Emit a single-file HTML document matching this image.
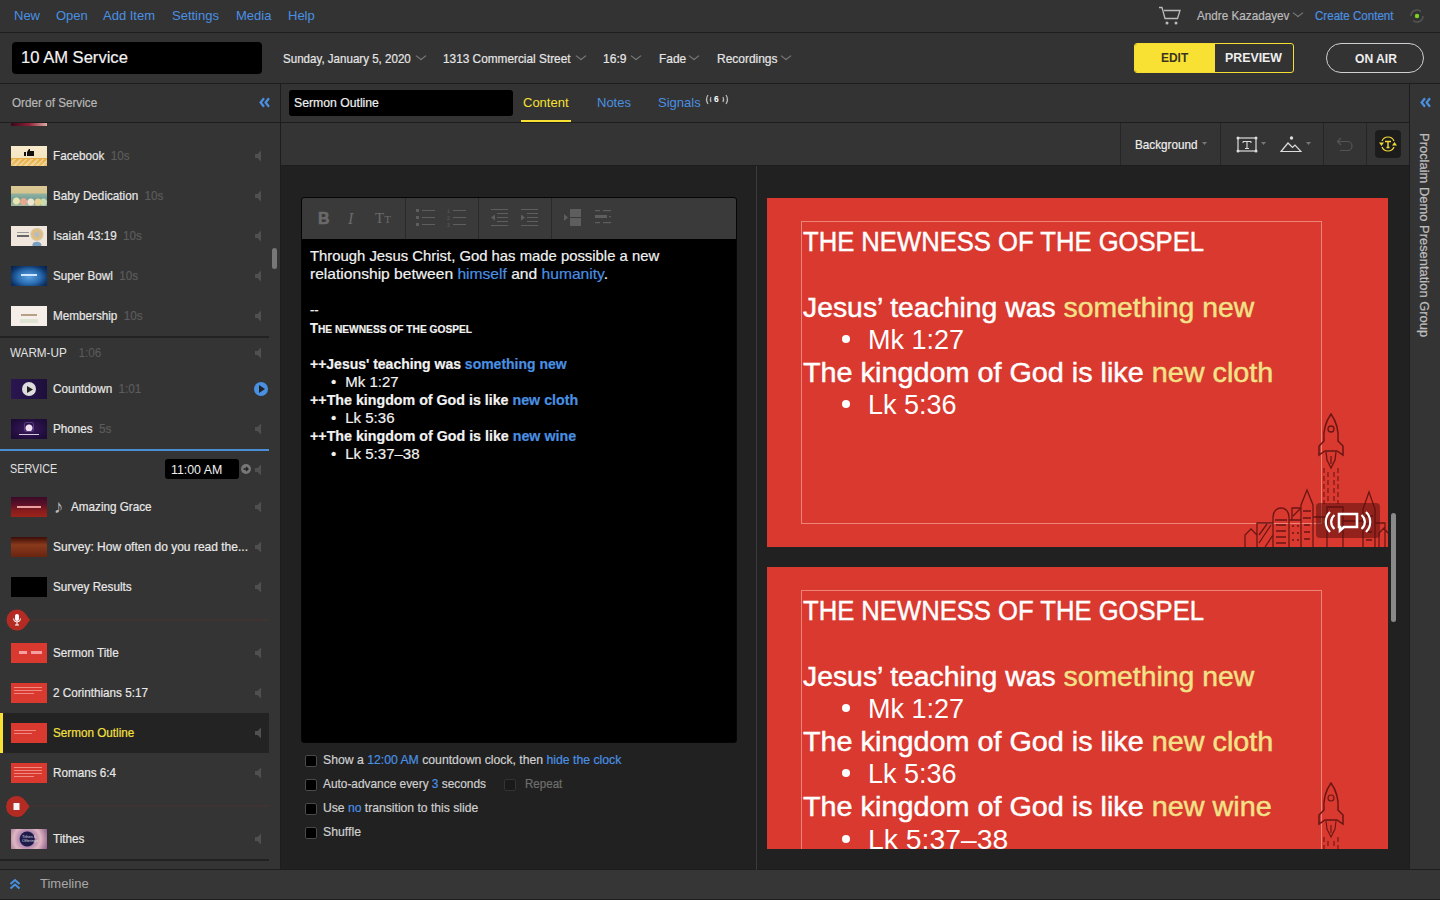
<!DOCTYPE html>
<html><head><meta charset="utf-8">
<style>
*{margin:0;padding:0;box-sizing:border-box}
html,body{width:1440px;height:900px;overflow:hidden;background:#333;font-family:"Liberation Sans",sans-serif;color:#ddd}
.a{position:absolute}
.t{position:absolute;white-space:nowrap;line-height:1;transform-origin:0 0}
#top{left:0;top:0;width:1440px;height:32px;background:#333}
#bar2{left:0;top:33px;width:1440px;height:50px;background:#333}
.hl{position:absolute;height:1px;background:#1d1d1d}
.vl{position:absolute;width:1px;background:#1d1d1d}
#side{left:0;top:123px;width:280px;height:746px;background:#343434;overflow:hidden}
#main{left:281px;top:166px;width:1128px;height:704px;background:#212121}
#tb{left:281px;top:123px;width:1128px;height:42px;background:#343434}
#rside{left:1410px;top:84px;width:30px;height:786px;background:#343434}
#bottom{left:0;top:870px;width:1440px;height:29px;background:#363636}
.pt{transform-origin:0 0;-webkit-text-stroke:.2px currentColor}
.chev{position:absolute;width:9px;height:5px}
.chev:before{content:"";position:absolute;left:1px;top:-3px;width:5px;height:5px;border-right:1px solid #777;border-bottom:1px solid #777;transform:scaleX(1.3) rotate(45deg)}
.bl{color:#4a90e2}
.ln{white-space:nowrap;height:18px;transform-origin:0 0}

.cb{position:absolute;width:12px;height:12px;background:#000;border:1px solid #4a4a4a;border-radius:2px}
.slide{background:#d9392f;overflow:hidden}
.slide .sl{-webkit-text-stroke:.45px #fff}
.slide .yl{-webkit-text-stroke:.45px #f2e288}
.sl{white-space:nowrap;height:32.6px;transform-origin:0 0}
.yl{color:#f2e288}
.menu{font-size:13px;color:#4a90e2;top:9px}
</style></head><body>
<!-- top menu -->
<div id="top" class="a"></div>
<div class="hl" style="left:0;top:32px;width:1440px"></div>
<div class="t menu" style="left:14px">New</div>
<div class="t menu" style="left:56px">Open</div>
<div class="t menu" style="left:103px">Add Item</div>
<div class="t menu" style="left:172px">Settings</div>
<div class="t menu" style="left:236px">Media</div>
<div class="t menu" style="left:288px">Help</div>

<div id="bar2" class="a"></div>
<div class="hl" style="left:0;top:83px;width:1440px"></div>
<div class="a" style="left:12px;top:42px;width:250px;height:32px;background:#000;border-radius:4px"></div>


<!-- bar2 content -->
<div class="t pt" style="left:21px;top:49px;font-size:17px;color:#f2f2f2;transform:scaleX(.975)">10 AM Service</div>
<div class="t pt" style="left:283px;top:52px;font-size:13px;color:#e6e6e6;transform:scaleX(.89)">Sunday, January 5, 2020</div>
<div class="chev" style="left:417px;top:56px"></div>
<div class="t pt" style="left:443px;top:52px;font-size:13px;color:#e6e6e6;transform:scaleX(.91)">1313 Commercial Street</div>
<div class="chev" style="left:577px;top:56px"></div>
<div class="t pt" style="left:603px;top:52px;font-size:13px;color:#e6e6e6;transform:scaleX(.93)">16:9</div>
<div class="chev" style="left:632px;top:56px"></div>
<div class="t pt" style="left:659px;top:52px;font-size:13px;color:#e6e6e6;transform:scaleX(.92)">Fade</div>
<div class="chev" style="left:690px;top:56px"></div>
<div class="t pt" style="left:717px;top:52px;font-size:13px;color:#e6e6e6;transform:scaleX(.92)">Recordings</div>
<div class="chev" style="left:782px;top:56px"></div>

<div class="a" style="left:1134px;top:43px;width:160px;height:30px;border:1px solid #f5de32;border-radius:3px;background:#333;overflow:hidden">
  <div class="a" style="left:0;top:0;width:80px;height:28px;background:#f8e132"></div>
</div>
<div class="t" style="left:1161px;top:51px;font-size:13px;font-weight:bold;color:#3a3520;transform:scaleX(.92)">EDIT</div>
<div class="t" style="left:1225px;top:51px;font-size:13px;font-weight:bold;color:#eee;transform:scaleX(.95)">PREVIEW</div>
<div class="a" style="left:1326px;top:43px;width:98px;height:30px;border:1px solid #d0d0d0;border-radius:15px"></div>
<div class="t" style="left:1355px;top:52px;font-size:13px;font-weight:bold;color:#eee;transform:scaleX(.93)">ON AIR</div>

<!-- top right -->
<svg class="a" style="left:1158px;top:6px" width="24" height="20" viewBox="0 0 24 20"><path d="M1 1.5h3l3 11h12.5l2.5-8H6" fill="none" stroke="#bbb" stroke-width="1.3"/><circle cx="9" cy="17" r="1.5" fill="#bbb"/><circle cx="18" cy="17" r="1.5" fill="#bbb"/></svg>
<div class="t pt" style="left:1197px;top:9px;font-size:13px;color:#bcbcbc;transform:scaleX(.9)">Andre Kazadayev</div>
<div class="chev" style="left:1294px;top:13px"></div>
<div class="t pt" style="left:1315px;top:9px;font-size:13px;color:#4a90e2;transform:scaleX(.89)">Create Content</div>
<svg class="a" style="left:1408px;top:6px" width="18" height="20" viewBox="0 0 18 20"><path d="M3 10a6 6 0 0 1 10-4.5M15 10a6 6 0 0 1-10 4.5" fill="none" stroke="#555" stroke-width="1.5"/><circle cx="9" cy="10" r="2.2" fill="#7ed321"/></svg>

<!-- tabs row -->
<div class="t pt" style="left:12px;top:96px;font-size:13px;color:#b8b8b8;transform:scaleX(.9)">Order of Service</div>
<svg class="a" style="left:259px;top:97px" width="11" height="11" viewBox="0 0 11 11"><path d="M5 1.2L1.6 5.5 5 9.8M10 1.2L6.6 5.5 10 9.8" fill="none" stroke="#4a90e2" stroke-width="2.2"/></svg>
<div class="a" style="left:289px;top:90px;width:224px;height:26px;background:#000;border-radius:3px"></div>
<div class="t pt" style="left:294px;top:96px;font-size:13px;color:#f0f0f0;transform:scaleX(.94)">Sermon Outline</div>
<div class="t" style="left:523px;top:96px;font-size:13px;color:#f8e132">Content</div>
<div class="a" style="left:521px;top:120px;width:50px;height:2px;background:#f8e132"></div>
<div class="t" style="left:597px;top:96px;font-size:13px;color:#4a90e2">Notes</div>
<div class="t" style="left:658px;top:96px;font-size:13px;color:#4a90e2">Signals</div>
<svg class="a" style="left:704px;top:93px" width="26" height="13" viewBox="0 0 26 13"><path d="M4 2c-2 3-2 6 0 9M7 4c-1 2-1 3 0 5M19 4c1 2 1 3 0 5M22 2c2 3 2 6 0 9" fill="none" stroke="#bbb" stroke-width="1.2"/><text x="10" y="9" font-family="Liberation Sans" font-weight="bold" font-size="8.5" fill="#fff">6</text></svg>
<div class="hl" style="left:0;top:122px;width:1440px"></div>
<div id="side" class="a"><!-- sidebar list -->
<div class="a" style="left:11px;top:0;width:36px;height:3px;background:linear-gradient(90deg,#3a0818,#8a2038 50%,#e0a8a0)"></div>
<div class="a" style="left:11px;top:23px;width:36px;height:20px;background:repeating-linear-gradient(135deg,transparent 0 2px,rgba(255,255,255,.35) 2px 4px) 0 13px/100% 7px no-repeat,linear-gradient(#f8ebcc 0,#f4e4c0 62%,#e5ad45 62%,#eec26a 100%)"><svg class="a" style="left:13px;top:3px" width="10" height="7" viewBox="0 0 10 7"><path d="M0 3h2v4H0zM3 3l2-3h1v2h4v5H3z" fill="#111"/></svg></div><div class="t pt" style="left:53px;top:26px;font-size:13px;color:#e8e8e8;transform:scaleX(.9)">Facebook<span style="color:#5c5c5c;margin-left:7px">10s</span></div><svg class="a" style="left:254px;top:27px" width="8" height="12" viewBox="0 0 8 12"><path d="M1 4h2.5L7 0.5v11L3.5 8H1z" fill="#505050"/></svg>
<div class="a" style="left:11px;top:63px;width:36px;height:20px;background:radial-gradient(circle at 15% 75%,#e8e6b0 0 3px,transparent 4px),radial-gradient(circle at 35% 78%,#e8a890 0 3px,transparent 4px),radial-gradient(circle at 55% 80%,#eee4d0 0 3px,transparent 4px),radial-gradient(circle at 75% 80%,#e8d090 0 3px,transparent 4px),radial-gradient(circle at 90% 80%,#c8dcb0 0 3px,transparent 4px),linear-gradient(#dcc896 0,#d8c48e 35%,#8fb0a0 40%,#6e9e96 70%,#a8b8a0 100%)"></div><div class="t pt" style="left:53px;top:66px;font-size:13px;color:#e8e8e8;transform:scaleX(.9)">Baby Dedication<span style="color:#5c5c5c;margin-left:7px">10s</span></div><svg class="a" style="left:254px;top:67px" width="8" height="12" viewBox="0 0 8 12"><path d="M1 4h2.5L7 0.5v11L3.5 8H1z" fill="#505050"/></svg>
<div class="a" style="left:11px;top:103px;width:36px;height:20px;background:linear-gradient(#666,#666) 6px 9px/12px 2px no-repeat,linear-gradient(#999,#999) 6px 6px/12px 1px no-repeat,radial-gradient(circle at 72% 42%,#a8b8e0 0,#e8c070 5px,#d0c8b0 6px,transparent 7px),radial-gradient(ellipse at 72% 95%,#7aa0c0 0 4px,transparent 5px),#f0e6dc"></div><div class="t pt" style="left:53px;top:106px;font-size:13px;color:#e8e8e8;transform:scaleX(.9)">Isaiah 43:19<span style="color:#5c5c5c;margin-left:7px">10s</span></div><svg class="a" style="left:254px;top:107px" width="8" height="12" viewBox="0 0 8 12"><path d="M1 4h2.5L7 0.5v11L3.5 8H1z" fill="#505050"/></svg>
<div class="a" style="left:11px;top:143px;width:36px;height:20px;background:linear-gradient(#cfe8ff,#cfe8ff) 10px 8px/16px 2px no-repeat,radial-gradient(ellipse at 50% 55%,#5aa0e0 0,#2a6cb0 45%,#0e3468 75%,#081c40 100%)"></div><div class="t pt" style="left:53px;top:146px;font-size:13px;color:#e8e8e8;transform:scaleX(.9)">Super Bowl<span style="color:#5c5c5c;margin-left:7px">10s</span></div><svg class="a" style="left:254px;top:147px" width="8" height="12" viewBox="0 0 8 12"><path d="M1 4h2.5L7 0.5v11L3.5 8H1z" fill="#505050"/></svg>
<div class="a" style="left:11px;top:183px;width:36px;height:20px;background:linear-gradient(#b8a088,#b8a088) 10px 8px/16px 2px no-repeat,linear-gradient(#e0e4d4,#e0e4d4) 9px 13px/18px 4px no-repeat,#f6eee8"></div><div class="t pt" style="left:53px;top:186px;font-size:13px;color:#e8e8e8;transform:scaleX(.9)">Membership<span style="color:#5c5c5c;margin-left:7px">10s</span></div><svg class="a" style="left:254px;top:187px" width="8" height="12" viewBox="0 0 8 12"><path d="M1 4h2.5L7 0.5v11L3.5 8H1z" fill="#505050"/></svg>
<div class="a" style="left:0;top:213px;width:269px;height:2px;background:#222"></div>
<div class="t" style="left:10px;top:223px;font-size:13px;color:#e2e2e2;transform:scaleX(.9);transform-origin:0 0">WARM-UP<span style="color:#5c5c5c;margin-left:13px">1:06</span></div>
<svg class="a" style="left:254px;top:224px" width="8" height="12" viewBox="0 0 8 12"><path d="M1 4h2.5L7 0.5v11L3.5 8H1z" fill="#505050"/></svg>
<div class="a" style="left:11px;top:256px;width:36px;height:20px;background:linear-gradient(90deg,#2a1650,#1d0f3c)"><div class="a" style="left:11px;top:3px;width:14px;height:14px;border-radius:50%;background:#ddd"></div><svg class="a" style="left:16px;top:7px" width="6" height="7" viewBox="0 0 6 7"><path d="M0 0l6 3.5L0 7z" fill="#222"/></svg></div><div class="t pt" style="left:53px;top:259px;font-size:13px;color:#e8e8e8;transform:scaleX(.9)">Countdown<span style="color:#5c5c5c;margin-left:7px">1:01</span></div><svg class="a" style="left:254px;top:260px" width="8" height="12" viewBox="0 0 8 12"><path d="M1 4h2.5L7 0.5v11L3.5 8H1z" fill="#505050"/></svg>
<div class="a" style="left:254px;top:259px;width:14px;height:14px;border-radius:50%;background:#4a90e2"></div><svg class="a" style="left:259px;top:262px" width="6" height="8" viewBox="0 0 6 8"><path d="M0 0l6 4L0 8z" fill="#222"/></svg>
<div class="a" style="left:11px;top:296px;width:36px;height:20px;background:radial-gradient(circle at 50% 45%,#f0e0f0 0 3px,transparent 4px),linear-gradient(#d8c8e0,#d8c8e0) 8px 15px/20px 1px no-repeat,radial-gradient(ellipse at 50% 50%,#3a1a60,#1e0c38 80%)"><div class="a" style="left:13px;top:3px;width:10px;height:10px;border:1px solid #5a3a80;border-radius:2px"></div></div><div class="t pt" style="left:53px;top:299px;font-size:13px;color:#e8e8e8;transform:scaleX(.9)">Phones<span style="color:#5c5c5c;margin-left:7px">5s</span></div><svg class="a" style="left:254px;top:300px" width="8" height="12" viewBox="0 0 8 12"><path d="M1 4h2.5L7 0.5v11L3.5 8H1z" fill="#505050"/></svg>
<div class="a" style="left:0;top:326px;width:269px;height:2px;background:#4a8fd6"></div>
<div class="t" style="left:10px;top:339px;font-size:13px;color:#e2e2e2;transform:scaleX(.83);transform-origin:0 0">SERVICE</div>
<div class="a" style="left:165px;top:336px;width:74px;height:20px;background:#000;border-radius:3px"></div>
<div class="t" style="left:171px;top:340px;font-size:13px;color:#f0f0f0;transform:scaleX(.95);transform-origin:0 0">11:00 AM</div>
<div class="a" style="left:241px;top:341px;width:10px;height:10px;border-radius:50%;background:#777"></div><svg class="a" style="left:242px;top:342px" width="8" height="8" viewBox="0 0 8 8"><path d="M1.5 4h4M4 2l2 2-2 2" fill="none" stroke="#222" stroke-width="1.3"/></svg>
<svg class="a" style="left:254px;top:341px" width="8" height="12" viewBox="0 0 8 12"><path d="M1 4h2.5L7 0.5v11L3.5 8H1z" fill="#505050"/></svg>
<div class="a" style="left:11px;top:374px;width:36px;height:20px;background:linear-gradient(#e8a0a0,#e8a0a0) 6px 9px/24px 2px no-repeat,linear-gradient(#3a0a28 0,#5a1028 35%,#8a1c1c 70%,#9a2418 100%)"></div><div class="t" style="left:54px;top:374px;font-size:19px;color:#bbb">&#9834;</div><div class="t pt" style="left:71px;top:377px;font-size:13px;color:#e8e8e8;transform:scaleX(.9)">Amazing Grace</div><svg class="a" style="left:254px;top:378px" width="8" height="12" viewBox="0 0 8 12"><path d="M1 4h2.5L7 0.5v11L3.5 8H1z" fill="#505050"/></svg>
<div class="a" style="left:11px;top:414px;width:36px;height:20px;background:linear-gradient(#3a0c08,#8a3a1c 40%,#6a2410 100%)"></div><div class="t pt" style="left:53px;top:417px;font-size:13px;color:#e8e8e8;transform:scaleX(.924)">Survey: How often do you read the...</div><svg class="a" style="left:254px;top:418px" width="8" height="12" viewBox="0 0 8 12"><path d="M1 4h2.5L7 0.5v11L3.5 8H1z" fill="#505050"/></svg>
<div class="a" style="left:11px;top:454px;width:36px;height:20px;background:#000"></div><div class="t pt" style="left:53px;top:457px;font-size:13px;color:#e8e8e8;transform:scaleX(.9)">Survey Results</div><svg class="a" style="left:254px;top:458px" width="8" height="12" viewBox="0 0 8 12"><path d="M1 4h2.5L7 0.5v11L3.5 8H1z" fill="#505050"/></svg>
<div class="a" style="left:29px;top:496px;width:240px;height:2px;background:#3f3232"></div>
<svg class="a" style="left:6px;top:486px" width="26" height="22" viewBox="0 0 26 22"><path d="M11 0.5a10.5 10.5 0 1 0 0 21c4 0 7-2 9-5l4-5.5-4-5.5c-2-3-5-5-9-5z" fill="#b42b23"/><rect x="9" y="5" width="4" height="7" rx="2" fill="#fff"/><path d="M7.5 9.5a3.5 3.5 0 0 0 7 0M11 13v3M9 16h4" fill="none" stroke="#fff" stroke-width="1"/></svg>
<div class="a" style="left:11px;top:520px;width:36px;height:20px;background:#d9392f"><div class="a" style="left:8px;top:8px;width:8px;height:3px;background:#f4a0a0"></div><div class="a" style="left:20px;top:8px;width:11px;height:3px;background:#f4a0a0"></div></div><div class="t pt" style="left:53px;top:523px;font-size:13px;color:#e8e8e8;transform:scaleX(.9)">Sermon Title</div><svg class="a" style="left:254px;top:524px" width="8" height="12" viewBox="0 0 8 12"><path d="M1 4h2.5L7 0.5v11L3.5 8H1z" fill="#505050"/></svg>
<div class="a" style="left:11px;top:560px;width:36px;height:20px;background:#d9392f"><div class="a" style="left:3px;top:4px;width:28px;height:1px;background:#f08a80"></div><div class="a" style="left:3px;top:7px;width:28px;height:1px;background:#f08a80"></div><div class="a" style="left:3px;top:10px;width:20px;height:1px;background:#f08a80"></div></div><div class="t pt" style="left:53px;top:563px;font-size:13px;color:#e8e8e8;transform:scaleX(.9)">2 Corinthians 5:17</div><svg class="a" style="left:254px;top:564px" width="8" height="12" viewBox="0 0 8 12"><path d="M1 4h2.5L7 0.5v11L3.5 8H1z" fill="#505050"/></svg>
<div class="a" style="left:0;top:590px;width:269px;height:40px;background:#232323"></div><div class="a" style="left:0;top:590px;width:3px;height:40px;background:#f8e132"></div>
<div class="a" style="left:11px;top:600px;width:36px;height:20px;background:#d9392f"><div class="a" style="left:3px;top:7px;width:22px;height:1px;background:#f08a80"></div><div class="a" style="left:3px;top:10px;width:18px;height:1px;background:#f08a80"></div></div><div class="t pt" style="left:53px;top:603px;font-size:13px;color:#e8e8e8;transform:scaleX(.9)"><span style="color:#f5e042">Sermon Outline</span></div><svg class="a" style="left:254px;top:604px" width="8" height="12" viewBox="0 0 8 12"><path d="M1 4h2.5L7 0.5v11L3.5 8H1z" fill="#505050"/></svg>
<div class="a" style="left:11px;top:640px;width:36px;height:20px;background:#d9392f"><div class="a" style="left:3px;top:4px;width:28px;height:1px;background:#f08a80"></div><div class="a" style="left:3px;top:7px;width:28px;height:1px;background:#f08a80"></div><div class="a" style="left:3px;top:10px;width:28px;height:1px;background:#f08a80"></div><div class="a" style="left:3px;top:13px;width:20px;height:1px;background:#f08a80"></div></div><div class="t pt" style="left:53px;top:643px;font-size:13px;color:#e8e8e8;transform:scaleX(.9)">Romans 6:4</div><svg class="a" style="left:254px;top:644px" width="8" height="12" viewBox="0 0 8 12"><path d="M1 4h2.5L7 0.5v11L3.5 8H1z" fill="#505050"/></svg>
<div class="a" style="left:29px;top:682px;width:240px;height:2px;background:#3f3232"></div>
<svg class="a" style="left:6px;top:673px" width="26" height="21" viewBox="0 0 26 21"><path d="M10.5 0a10.5 10.5 0 1 0 0 21c4 0 7-2 9-5l4-5.5-4-5.5c-2-3-5-5-9-5z" fill="#b42b23"/><rect x="7.5" y="7" width="6" height="7" fill="#f4f4f4"/></svg>
<div class="a" style="left:11px;top:706px;width:36px;height:20px;background:radial-gradient(circle at 45% 50%,#1e1b4a 0,#1e1b4a 7px,#b58ab0 8px,#e0b8c0 60%,#8a5a8a 100%)"><div class="t" style="left:11px;top:6px;font-size:4px;color:#ddd;line-height:4px">Tithes &amp;<br>Offerings</div></div><div class="t pt" style="left:53px;top:709px;font-size:13px;color:#e8e8e8;transform:scaleX(.9)">Tithes</div><svg class="a" style="left:254px;top:710px" width="8" height="12" viewBox="0 0 8 12"><path d="M1 4h2.5L7 0.5v11L3.5 8H1z" fill="#505050"/></svg>
<div class="a" style="left:0;top:736px;width:269px;height:2px;background:#222"></div>
<div class="a" style="left:272px;top:125px;width:5px;height:21px;border-radius:3px;background:#777"></div></div>
<div class="vl" style="left:280px;top:84px;height:786px"></div>
<div id="tb" class="a"></div>
<!-- toolbar -->
<div class="vl" style="left:1120px;top:123px;height:42px;background:#262626"></div>
<div class="vl" style="left:1220px;top:123px;height:42px;background:#262626"></div>
<div class="vl" style="left:1323px;top:123px;height:42px;background:#262626"></div>
<div class="vl" style="left:1366px;top:123px;height:42px;background:#262626"></div>
<div class="t pt" style="left:1135px;top:138px;font-size:13px;color:#eee;transform:scaleX(.9)">Background</div>
<svg class="a" style="left:1202px;top:142px" width="5" height="3" viewBox="0 0 5 3"><path d="M0 0h5L2.5 3z" fill="#777"/></svg>
<svg class="a" style="left:1236px;top:136px" width="22" height="17" viewBox="0 0 22 17"><rect x="2" y="2" width="18" height="13" fill="none" stroke="#ddd" stroke-width="1.2"/><circle cx="2" cy="2" r="1.5" fill="#ddd"/><circle cx="20" cy="2" r="1.5" fill="#ddd"/><circle cx="2" cy="15" r="1.5" fill="#ddd"/><circle cx="20" cy="15" r="1.5" fill="#ddd"/><path d="M7 5.5h8M11 5.5v7M9 12.5h4M7 5.5v1.5M15 5.5v1.5" fill="none" stroke="#ddd" stroke-width="1.1"/></svg>
<svg class="a" style="left:1261px;top:142px" width="5" height="3" viewBox="0 0 5 3"><path d="M0 0h5L2.5 3z" fill="#777"/></svg>
<svg class="a" style="left:1280px;top:136px" width="22" height="17" viewBox="0 0 22 17"><circle cx="11.5" cy="2" r="1.7" fill="#ddd"/><path d="M1 15.5L8 7l4.5 4.5L15 9l6 6.5z" fill="none" stroke="#ddd" stroke-width="1.2" stroke-linejoin="miter"/></svg>
<svg class="a" style="left:1306px;top:142px" width="5" height="3" viewBox="0 0 5 3"><path d="M0 0h5L2.5 3z" fill="#777"/></svg>
<svg class="a" style="left:1336px;top:137px" width="18" height="14" viewBox="0 0 18 14"><path d="M5 1L1.5 4.5 5 8M1.5 4.5h10a4.5 4.5 0 0 1 0 9H4" fill="none" stroke="#555" stroke-width="1.2"/></svg>
<div class="a" style="left:1375px;top:130px;width:26px;height:28px;background:#1c1c1c;border-radius:4px"></div>
<svg class="a" style="left:1377px;top:133px" width="22" height="22" viewBox="0 0 22 22"><path d="M5 8a6.5 6.5 0 0 1 12 0M17 14a6.5 6.5 0 0 1-12 0" fill="none" stroke="#f3d83a" stroke-width="1.2"/><path d="M2 9.5h5L4.5 13zM15 12.5h5L17.5 9z" fill="#f3d83a"/><path d="M8 8.5h6M11 8.5v6M9.5 14.5h3" fill="none" stroke="#f3d83a" stroke-width="1.4"/></svg>
<div class="hl" style="left:281px;top:165px;width:1128px"></div>
<div id="main" class="a"></div>
<div class="vl" style="left:1409px;top:84px;height:786px"></div>
<div id="rside" class="a"></div>
<svg class="a" style="left:1420px;top:97px" width="11" height="11" viewBox="0 0 11 11"><path d="M5 1.2L1.6 5.5 5 9.8M10 1.2L6.6 5.5 10 9.8" fill="none" stroke="#4a90e2" stroke-width="2.2"/></svg>
<div class="t" style="left:1431px;top:133px;font-size:13px;color:#bdbdbd;-webkit-text-stroke:.25px currentColor;transform:rotate(90deg) scaleX(.995);transform-origin:0 0">Proclaim Demo Presentation Group</div>
<div class="hl" style="left:0;top:869px;width:1440px"></div>
<div id="bottom" class="a"></div>
<svg class="a" style="left:9px;top:878px" width="12" height="12" viewBox="0 0 12 12"><path d="M1.5 6L6 2l4.5 4M1.5 10.5L6 6.5l4.5 4" fill="none" stroke="#4a90e2" stroke-width="2"/></svg>
<div class="t" style="left:40px;top:877px;font-size:13px;color:#a8a8a8">Timeline</div>
<div class="hl" style="left:0;top:899px;width:1440px"></div>

<!-- editor -->
<div class="a" style="left:301px;top:197px;width:436px;height:546px;background:#000;border-radius:3px;border:1px solid #050505;overflow:hidden">
  <div class="a" style="left:0;top:0;width:434px;height:41px;background:#3a3a3a"></div>
  <div class="a" style="left:103px;top:0;width:1px;height:41px;background:#2a2a2a"></div>
  <div class="a" style="left:176px;top:0;width:1px;height:41px;background:#2a2a2a"></div>
  <div class="a" style="left:249px;top:0;width:1px;height:41px;background:#2a2a2a"></div>
</div>
<div class="t" style="left:318px;top:211px;font-size:16px;font-weight:bold;color:#6a6a6a;-webkit-text-stroke:.5px #6a6a6a">B</div>
<div class="t" style="left:348px;top:211px;font-size:16px;font-style:italic;color:#6a6a6a;font-family:'Liberation Serif',serif">I</div>
<div class="t" style="left:375px;top:211px;font-size:15px;color:#6a6a6a;font-family:'Liberation Serif',serif">T<span style="font-size:11px">T</span></div>
<svg class="a" style="left:415px;top:208px" width="54" height="19" viewBox="0 0 54 19"><g fill="#5e5e5e"><rect x="1" y="1" width="3" height="3"/><rect x="1" y="8" width="3" height="3"/><rect x="1" y="15" width="3" height="3"/><rect x="7" y="2" width="13" height="1"/><rect x="7" y="9" width="13" height="1"/><rect x="7" y="16" width="13" height="1"/><rect x="38" y="2" width="13" height="1"/><rect x="38" y="9" width="13" height="1"/><rect x="38" y="16" width="13" height="1"/></g><g fill="#5e5e5e" font-size="5" font-family="Liberation Sans"><text x="32" y="5">1</text><text x="32" y="12">2</text><text x="32" y="19">3</text></g></svg>
<svg class="a" style="left:490px;top:208px" width="50" height="19" viewBox="0 0 50 19"><g fill="#5e5e5e"><rect x="1" y="1" width="17" height="1"/><rect x="7" y="5" width="11" height="1"/><rect x="7" y="9" width="11" height="1"/><rect x="7" y="13" width="11" height="1"/><rect x="1" y="17" width="17" height="1"/><path d="M1 9.5L5 6.5v6z"/><rect x="31" y="1" width="17" height="1"/><rect x="37" y="5" width="11" height="1"/><rect x="37" y="9" width="11" height="1"/><rect x="37" y="13" width="11" height="1"/><rect x="31" y="17" width="17" height="1"/><path d="M35 9.5L31 6.5v6z"/></g></svg>
<svg class="a" style="left:563px;top:208px" width="50" height="19" viewBox="0 0 50 19"><g fill="#5e5e5e"><path d="M1 6l4 3.5L1 13z"/><rect x="7" y="1" width="11" height="8"/><rect x="7" y="10" width="11" height="8"/><rect x="32" y="2" width="5" height="1.2"/><rect x="40" y="2" width="8" height="1.2"/><rect x="32" y="7" width="12" height="3"/><rect x="46" y="8" width="2" height="1.2"/><rect x="32" y="14" width="5" height="1.2"/><rect x="40" y="14" width="8" height="1.2"/></g></svg>
<div class="a" style="left:310px;top:247px;width:420px;font-size:15px;line-height:18px;color:#f2f2f2;-webkit-text-stroke:.2px currentColor">
<div class="ln" id="e1" style="transform:scaleX(.99)">Through Jesus Christ, God has made possible a new</div>
<div class="ln" id="e2" style="transform:scaleX(1.04)">relationship between <span class="bl">himself</span> and <span class="bl">humanity</span>.</div>
<div class="ln">&nbsp;</div>
<div class="ln" style="font-size:13px">--</div>
<div class="ln" id="e5" style="font-weight:bold;font-size:14px;transform:scaleX(.927)">T<span style="font-size:11px">HE NEWNESS OF THE GOSPEL</span></div>
<div class="ln">&nbsp;</div>
<div class="ln" id="e7" style="font-weight:bold;transform:scaleX(.932)">++Jesus' teaching was <span class="bl">something new</span></div>
<div class="ln" id="e8" style="padding-left:21px">&bull;<span style="margin-left:9px">Mk 1:27</span></div>
<div class="ln" id="e9" style="font-weight:bold;transform:scaleX(.949)">++The kingdom of God is like <span class="bl">new cloth</span></div>
<div class="ln" style="padding-left:21px">&bull;<span style="margin-left:9px">Lk 5:36</span></div>
<div class="ln" id="e11" style="font-weight:bold;transform:scaleX(.95)">++The kingdom of God is like <span class="bl">new wine</span></div>
<div class="ln" id="e12" style="padding-left:21px">&bull;<span style="margin-left:9px">Lk 5:37&ndash;38</span></div>
</div>
<div class="vl" style="left:756px;top:166px;height:704px;background:#3a3a3a"></div>

<!-- options -->
<div class="cb" style="left:305px;top:755px"></div>
<div class="t pt" style="left:323px;top:753px;font-size:13px;color:#cfcfcf;transform:scaleX(.94)">Show a <span class="bl">12:00 AM</span> countdown clock, then <span class="bl">hide the clock</span></div>
<div class="cb" style="left:305px;top:779px"></div>
<div class="t pt" style="left:323px;top:777px;font-size:13px;color:#cfcfcf;transform:scaleX(.913)">Auto-advance every <span class="bl">3</span> seconds</div>
<div class="cb" style="left:504px;top:779px;border-color:#333;background:#1a1a1a"></div>
<div class="t pt" style="left:525px;top:777px;font-size:13px;color:#6e6e6e;transform:scaleX(.89)">Repeat</div>
<div class="cb" style="left:305px;top:803px"></div>
<div class="t pt" style="left:323px;top:801px;font-size:13px;color:#cfcfcf;transform:scaleX(.934)">Use <span class="bl">no</span> transition to this slide</div>
<div class="cb" style="left:305px;top:827px"></div>
<div class="t pt" style="left:323px;top:825px;font-size:13px;color:#cfcfcf;transform:scaleX(.945)">Shuffle</div>
<!-- slides -->
<div class="a slide" style="left:767px;top:198px;width:621px;height:349px">
<div class="a" style="left:34px;top:23px;width:521px;height:303px;border:1px solid #ee8378"></div>
<div class="a" style="left:36px;top:28.4px;font-size:27px;line-height:32.6px;color:#fff">
<div class="sl" style="transform:scaleX(.949)">THE NEWNESS OF THE GOSPEL</div>
<div class="sl">&nbsp;</div>
<div class="sl" style="transform:scaleX(1.05)">Jesus&rsquo; teaching was <span class="yl">something new</span></div>
<div class="sl" style="padding-left:39px;-webkit-text-stroke:0"><span style="display:inline-block;width:8px;height:8px;border-radius:50%;background:#fff;vertical-align:6px;margin-right:18px"></span><span style="display:inline-block">Mk 1:27</span></div>
<div class="sl" style="transform:scaleX(1.066)">The kingdom of God is like <span class="yl">new cloth</span></div>
<div class="sl" style="padding-left:39px;-webkit-text-stroke:0"><span style="display:inline-block;width:8px;height:8px;border-radius:50%;background:#fff;vertical-align:6px;margin-right:18px"></span><span style="display:inline-block">Lk 5:36</span></div>
</div>
<svg class="a" style="left:0;top:0" width="621" height="349" viewBox="0 0 621 349" fill="none" stroke="#6a1614" stroke-width="1.3">
<path d="M564 216c-5 7-8 16-7 27l-5 5v9l6-4h12l6 4v-9l-5-5c1-11-2-20-7-27z" stroke-width="1.5"/><circle cx="564" cy="231" r="3"/><path d="M559 254l1 8 4 8 4-8 1-8" /><path d="M564 258v8"/>
<path d="M557 270v36M561 274v32M567 274v32M571 270v36" stroke-dasharray="5 3" stroke-width="1.1"/>
<path d="M478 349v-12l6-6 6 6v12M490 349v-24h16v24M492 345l12-18M492 337l8-11M498 349l8-12M506 349v-30c0-6 4-9 8-9s8 3 8 9v30M508 322h12M509 327h10M509 333h10M509 339h10M509 345h10M522 349v-27h12v27M525 328h2M530 328h2M525 335h2M530 335h2M525 342h2M530 342h2M525 322v-12h9v12M526 318l7-7M534 349v-42l6-15 6 15v42M536 313h8M536 320h8M537 327h6M537 334h6M537 341h6M546 349v-30h14v30M560 349v-40h16v40M576 349v-26h20v26M596 349v-38l6-17 6 17v38M598 318h8M599 326h6M599 334h6M599 342h6M608 349v-24h10v24M612 349v-14l5-5 4 5"/>
</svg>
<div class="a" style="left:549px;top:305px;width:64px;height:35px;border-radius:4px;background:rgba(90,15,12,.55)"></div>
<svg class="a" style="left:556px;top:311px" width="50" height="26" viewBox="0 0 50 26"><path d="M7 3a14 14 0 0 0 0 20M11.5 6a9 9 0 0 0 0 14M43 3a14 14 0 0 1 0 20M38.5 6a9 9 0 0 1 0 14" fill="none" stroke="#fff" stroke-width="2.2"/><path d="M16 5h18v13H21l-4 3.5V18h-1z" fill="none" stroke="#fff" stroke-width="2.6" stroke-linejoin="miter"/></svg>
</div>
<div class="a slide" style="left:767px;top:567px;width:621px;height:282px">
<div class="a" style="left:34px;top:23px;width:521px;height:400px;border:1px solid #ee8378"></div>
<div class="a" style="left:36px;top:28.4px;font-size:27px;line-height:32.6px;color:#fff">
<div class="sl" style="transform:scaleX(.949)">THE NEWNESS OF THE GOSPEL</div>
<div class="sl">&nbsp;</div>
<div class="sl" style="transform:scaleX(1.05)">Jesus&rsquo; teaching was <span class="yl">something new</span></div>
<div class="sl" style="padding-left:39px;-webkit-text-stroke:0"><span style="display:inline-block;width:8px;height:8px;border-radius:50%;background:#fff;vertical-align:6px;margin-right:18px"></span><span style="display:inline-block">Mk 1:27</span></div>
<div class="sl" style="transform:scaleX(1.066)">The kingdom of God is like <span class="yl">new cloth</span></div>
<div class="sl" style="padding-left:39px;-webkit-text-stroke:0"><span style="display:inline-block;width:8px;height:8px;border-radius:50%;background:#fff;vertical-align:6px;margin-right:18px"></span><span style="display:inline-block">Lk 5:36</span></div>
<div class="sl" style="transform:scaleX(1.066)">The kingdom of God is like <span class="yl">new wine</span></div>
<div class="sl" style="padding-left:39px;-webkit-text-stroke:0"><span style="display:inline-block;width:8px;height:8px;border-radius:50%;background:#fff;vertical-align:6px;margin-right:18px"></span><span style="display:inline-block;transform:scaleX(1.05);transform-origin:0 0">Lk 5:37&ndash;38</span></div>
</div>
<svg class="a" style="left:0;top:0" width="621" height="282" viewBox="0 0 621 282" fill="none" stroke="#6a1614" stroke-width="1.1">
<path d="M564 216c-5 7-8 16-7 27l-5 5v9l6-4h12l6 4v-9l-5-5c1-11-2-20-7-27z" stroke-width="1.5"/><circle cx="564" cy="231" r="3"/><path d="M559 254l1 8 4 8 4-8 1-8" /><path d="M564 258v8"/>
<path d="M557 270v36M561 274v32M567 274v32M571 270v36" stroke-dasharray="5 3" stroke-width="1.1"/></svg>
</div>
<div class="a" style="left:1391px;top:513px;width:5px;height:109px;border-radius:3px;background:#8a8a8a"></div>
</body></html>
